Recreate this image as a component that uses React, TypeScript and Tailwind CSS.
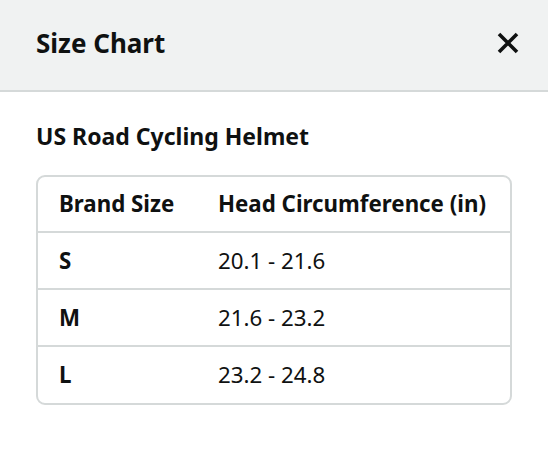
export default function App() {
  const rows = [
    { size: "S", range: "20.1 - 21.6" },
    { size: "M", range: "21.6 - 23.2" },
    { size: "L", range: "23.2 - 24.8" },
  ];

  return (
    <div className="w-[548px] h-[467px] bg-white text-[#0f1111]" style={{ fontFamily: '"Noto Sans", "Open Sans", Arial, sans-serif' }}>
      {/* Header */}
      <div className="h-[92px] bg-[#f0f2f2] border-b-2 border-[#d5d9d9] flex items-center justify-between pl-9 pr-[29px]">
        <h1 className="text-[26px] font-bold leading-none -mt-1">Size Chart</h1>
        <button className="w-[22px] h-[22px] flex items-center justify-center -mt-1">
          <svg width="22" height="22" viewBox="0 0 22 22">
            <path d="M2 2 L20 20 M20 2 L2 20" stroke="#0f1111" strokeWidth="3.6" strokeLinecap="butt" />
          </svg>
        </button>
      </div>

      {/* Body */}
      <div className="px-9 pt-[30px]">
        <h2 className="text-[23px] font-bold leading-[28px]">US Road Cycling Helmet</h2>
        <div className="mt-[25px] w-[476px] border-2 border-[#d5d9d9] rounded-[9px] overflow-hidden">
          <table className="w-full border-collapse text-[22.3px]">
            <thead>
              <tr className="h-[55px]">
                <th className="w-[159px] pl-[21px] text-left font-bold">Brand Size</th>
                <th className="pl-[21px] text-left font-bold">Head Circumference (in)</th>
              </tr>
            </thead>
            <tbody>
              {rows.map((r) => (
                <tr key={r.size} className="h-[57px] border-t-2 border-[#d5d9d9]">
                  <td className="pl-[21px] font-bold">{r.size}</td>
                  <td className="pl-[21px]">{r.range}</td>
                </tr>
              ))}
            </tbody>
          </table>
        </div>
      </div>
    </div>
  );
}
